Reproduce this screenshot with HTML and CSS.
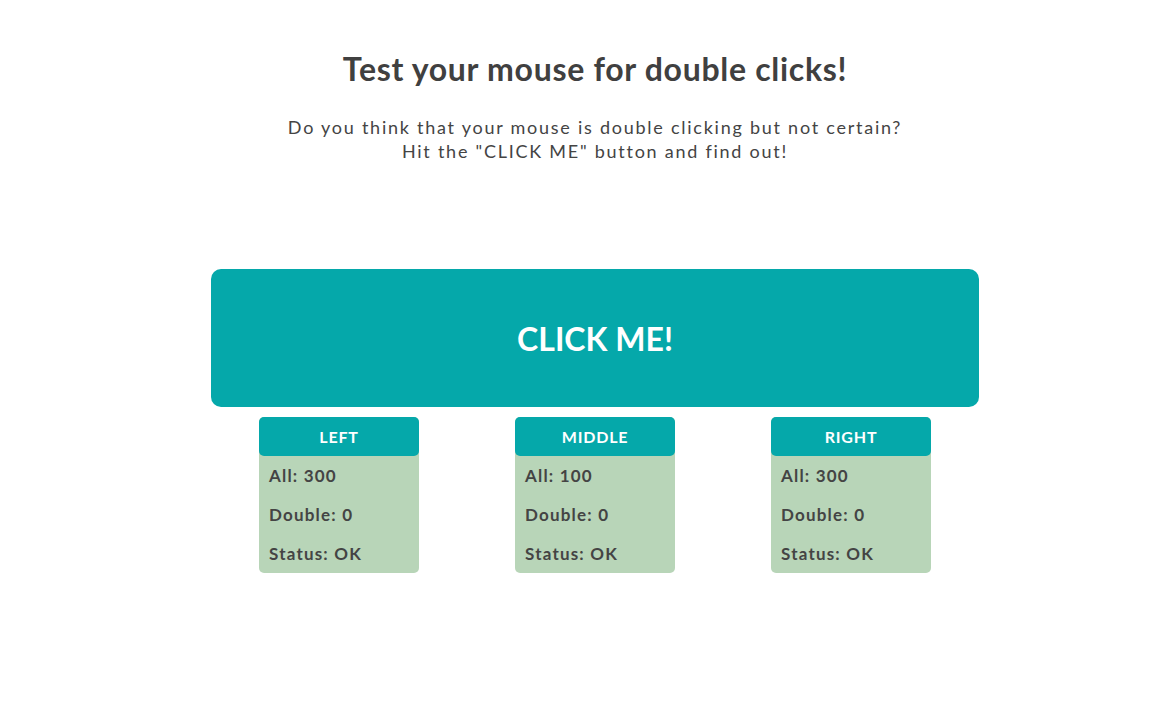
FILE: index.html
```html
<!DOCTYPE html>
<html>
<head>
<meta charset="utf-8">
<link rel="stylesheet" href="styles.css">
</head>
<body>
<main class="page">
  <h1 class="title">Test your mouse for double clicks!</h1>
  <p class="lead">Do you think that your mouse is double clicking but not certain?<br>Hit the "CLICK ME" button and find out!</p>
  <section class="tester">
    <button class="click-btn">CLICK ME!</button>
    <div class="cards">
      <div class="cell">
        <div class="card">
          <div class="card-head">LEFT</div>
          <div class="card-row">All: 300</div>
          <div class="card-row">Double: 0</div>
          <div class="card-row">Status: OK</div>
        </div>
      </div>
      <div class="cell">
        <div class="card">
          <div class="card-head">MIDDLE</div>
          <div class="card-row">All: 100</div>
          <div class="card-row">Double: 0</div>
          <div class="card-row">Status: OK</div>
        </div>
      </div>
      <div class="cell">
        <div class="card">
          <div class="card-head">RIGHT</div>
          <div class="card-row">All: 300</div>
          <div class="card-row">Double: 0</div>
          <div class="card-row">Status: OK</div>
        </div>
      </div>
    </div>
  </section>
</main>
</body>
</html>
```
FILE: styles.css
```css
html, body {
  margin: 0;
  padding: 0;
  background: #ffffff;
}
body {
  font-family: Lato, "Open Sans", sans-serif;
  color: #444444;
}
.page {
  width: 1190px;
  display: flex;
  flex-direction: column;
  align-items: center;
}
.title {
  margin: 49px 0 0;
  font-size: 32px;
  line-height: 40px;
  font-weight: 700;
  letter-spacing: 0.7px;
  color: #404040;
}
.lead {
  margin: 26px 0 0;
  font-size: 18px;
  line-height: 24px;
  letter-spacing: 1.75px;
  text-align: center;
  color: #444444;
}
.tester {
  margin-top: 106px;
  width: 768px;
  display: flex;
  flex-direction: column;
}
.click-btn {
  height: 138px;
  border: none;
  border-radius: 10px;
  background: #05a8aa;
  color: #ffffff;
  font-family: Lato, sans-serif;
  font-size: 32px;
  font-weight: 700;
  padding: 0;
  cursor: pointer;
}
.cards {
  margin-top: 10px;
  display: grid;
  grid-template-columns: repeat(3, 1fr);
}
.cell {
  display: flex;
  justify-content: center;
}
.card {
  width: 160px;
  height: 156px;
  background: #b8d5b8;
  border-radius: 5px;
}
.card-head {
  height: 39px;
  line-height: 40px;
  background: #05a8aa;
  color: #ffffff;
  border-radius: 5px;
  text-align: center;
  font-size: 16px;
  font-weight: 700;
  letter-spacing: 0.8px;
}
.card-row {
  height: 39px;
  line-height: 40px;
  padding-left: 10px;
  font-size: 17px;
  font-weight: 700;
  letter-spacing: 1.2px;
  color: #444444;
}
```
